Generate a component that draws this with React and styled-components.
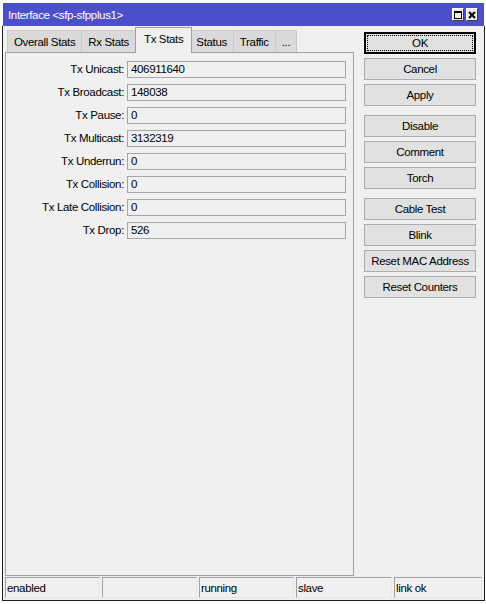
import styled, { createGlobalStyle, css } from 'styled-components';

const GlobalStyle = createGlobalStyle`
  html, body {
    margin: 0;
    background: #fff;
  }
  body {
    font-family: "Liberation Sans", Arial, sans-serif;
    font-size: 11.5px;
    letter-spacing: -0.35px;
    color: #000;
  }
`;

const Window = styled.div`
  margin: 3px 0 0 2px;
  width: 483px;
  display: flex;
  flex-direction: column;
`;

const TitleBar = styled.div`
  height: 23px;
  margin: 0 1px;
  padding: 0 6px 0 5px;
  background: #4b4fc9;
  color: #fff;
  display: flex;
  align-items: center;
  gap: 2px;
`;

const TitleText = styled.span`
  flex: 1;
`;

const TitleButton = styled.div`
  width: 12px;
  height: 13px;
  box-sizing: border-box;
  background: #ececec;
  border: 1px solid #404040;
  border-top-color: #fff;
  border-left-color: #fff;
  display: flex;
  align-items: center;
  justify-content: center;
`;

const Client = styled.div`
  height: 574px;
  background: #f0f0f0;
  border: 1px solid #1f1f1f;
  border-top: none;
  display: flex;
  flex-direction: column;
`;

const Main = styled.div`
  flex: 1;
  display: flex;
  padding: 1px 0 0 2px;
  min-height: 0;
`;

const LeftColumn = styled.div`
  width: 349px;
  display: flex;
  flex-direction: column;
`;

const TabRow = styled.div`
  height: 26px;
  margin-bottom: -1px;
  padding-left: 2px;
  display: flex;
  align-items: flex-end;
  position: relative;
  z-index: 1;
`;

const Tab = styled.div`
  height: 22px;
  margin-bottom: 1px;
  padding: 0 6px;
  box-sizing: border-box;
  border: 1px solid #c9c9c9;
  border-bottom: none;
  background: #dadada;
  display: flex;
  align-items: center;
  white-space: nowrap;

  & + & {
    margin-left: -1px;
  }

  ${(p) =>
    p.$active &&
    css`
      height: 26px;
      margin: 0 -2px 0 -3px;
      padding: 0 8px 3px;
      margin-bottom: 0;
      background: #f0f0f0;
      border-color: #a0a0a0;
      position: relative;
      z-index: 2;
    `}
`;

const Panel = styled.div`
  flex: 1;
  border: 1px solid #a0a0a0;
  padding-top: 8px;
`;

const StatsGrid = styled.div`
  display: grid;
  grid-template-columns: 118px 219px;
  column-gap: 3px;
  row-gap: 6px;
`;

const Label = styled.div`
  text-align: right;
  line-height: 17px;
  white-space: nowrap;
`;

const Value = styled.div`
  height: 17px;
  box-sizing: border-box;
  border: 1px solid #a6a6a6;
  padding: 0 3px;
  line-height: 15px;
`;

const ButtonColumn = styled.div`
  margin-left: 10px;
  width: 112px;
  padding-top: 5px;
  display: flex;
  flex-direction: column;
  gap: 4px;
`;

const Button = styled.button`
  height: 22px;
  padding: 0;
  font: inherit;
  letter-spacing: inherit;
  color: #000;
  background: #e1e1e1;
  border: 1px solid #adadad;
  position: relative;

  ${(p) => p.$groupStart && css`margin-top: 5px;`}

  ${(p) =>
    p.$default &&
    css`
      border-color: #000;
      box-shadow: inset 0 0 0 1px #000;
      &::after {
        content: '';
        position: absolute;
        inset: 2px;
        border: 1px dotted #000;
      }
    `}
`;

const StatusBar = styled.div`
  height: 24px;
  box-sizing: border-box;
  padding: 1px 2px 2px;
  display: grid;
  grid-template-columns: 95px 95px 95px 96px 88px;
  column-gap: 2px;
`;

const StatusCell = styled.div`
  border: 1px solid #a0a0a0;
  border-right-color: #e6e6e6;
  border-bottom-color: #e6e6e6;
  padding: 2px 0 0 1px;
  line-height: 17px;
  white-space: nowrap;
`;

const stats = [
  ['Tx Unicast', '406911640'],
  ['Tx Broadcast', '148038'],
  ['Tx Pause', '0'],
  ['Tx Multicast', '3132319'],
  ['Tx Underrun', '0'],
  ['Tx Collision', '0'],
  ['Tx Late Collision', '0'],
  ['Tx Drop', '526'],
];

const tabs = ['Overall Stats', 'Rx Stats', 'Tx Stats', 'Status', 'Traffic', '...'];

const buttons = [
  { label: 'OK', def: true },
  { label: 'Cancel' },
  { label: 'Apply' },
  { label: 'Disable', group: true },
  { label: 'Comment' },
  { label: 'Torch' },
  { label: 'Cable Test', group: true },
  { label: 'Blink' },
  { label: 'Reset MAC Address' },
  { label: 'Reset Counters' },
];

const statusCells = ['enabled', '', 'running', 'slave', 'link ok'];

const MaximizeIcon = () => (
  <svg width="8" height="8" viewBox="0 0 8 8">
    <rect x="0.5" y="0.5" width="7" height="7" fill="none" stroke="#000" />
    <rect x="0" y="0" width="8" height="2" fill="#000" />
  </svg>
);

const CloseIcon = () => (
  <svg width="8" height="8" viewBox="0 0 8 8">
    <path d="M1 1 L7 7 M7 1 L1 7" stroke="#000" strokeWidth="2" />
  </svg>
);

export default function App() {
  return (
    <>
      <GlobalStyle />
      <Window>
        <TitleBar>
          <TitleText>Interface &lt;sfp-sfpplus1&gt;</TitleText>
          <TitleButton>
            <MaximizeIcon />
          </TitleButton>
          <TitleButton>
            <CloseIcon />
          </TitleButton>
        </TitleBar>
        <Client>
          <Main>
            <LeftColumn>
              <TabRow>
                {tabs.map((t) => (
                  <Tab key={t} $active={t === 'Tx Stats'}>
                    {t}
                  </Tab>
                ))}
              </TabRow>
              <Panel>
                <StatsGrid>
                  {stats.map(([label, value]) => [
                    <Label key={label + '-l'}>{label}:</Label>,
                    <Value key={label + '-v'}>{value}</Value>,
                  ])}
                </StatsGrid>
              </Panel>
            </LeftColumn>
            <ButtonColumn>
              {buttons.map((b) => (
                <Button key={b.label} $default={b.def} $groupStart={b.group}>
                  {b.label}
                </Button>
              ))}
            </ButtonColumn>
          </Main>
          <StatusBar>
            {statusCells.map((s, i) => (
              <StatusCell key={i}>{s}</StatusCell>
            ))}
          </StatusBar>
        </Client>
      </Window>
    </>
  );
}
